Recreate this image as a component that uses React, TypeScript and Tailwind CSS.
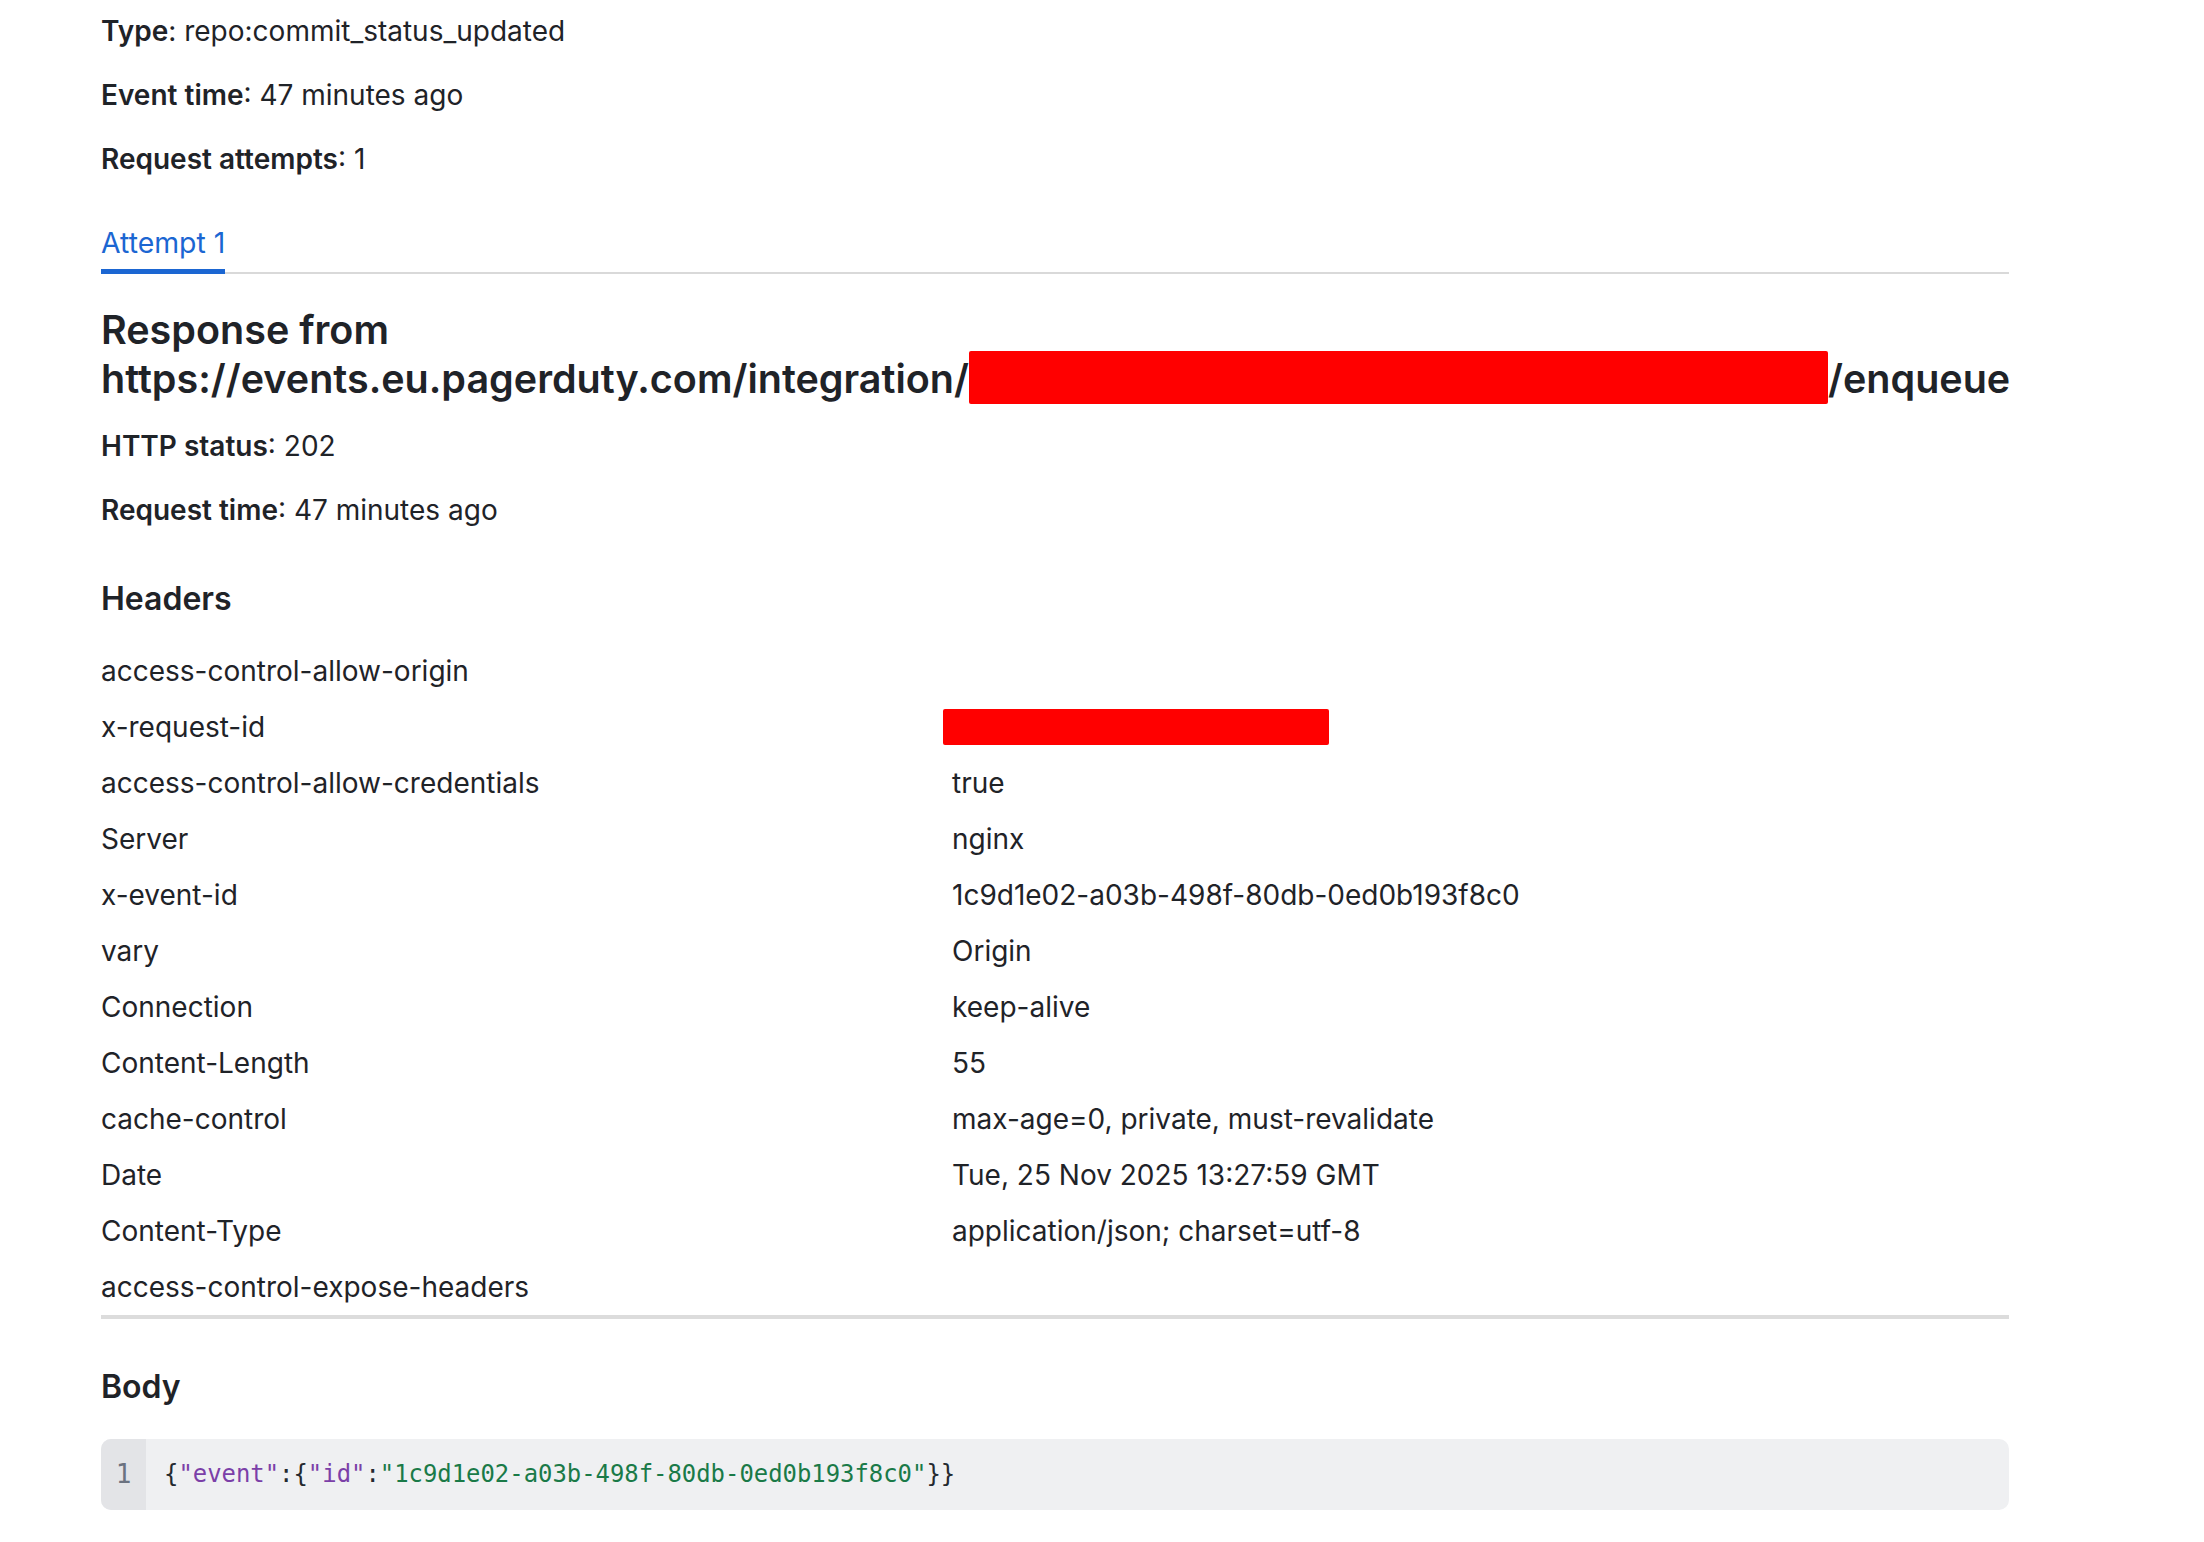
import React from "react";

const headers: [string, string | null][] = [
  ["access-control-allow-origin", ""],
  ["x-request-id", null],
  ["access-control-allow-credentials", "true"],
  ["Server", "nginx"],
  ["x-event-id", "1c9d1e02-a03b-498f-80db-0ed0b193f8c0"],
  ["vary", "Origin"],
  ["Connection", "keep-alive"],
  ["Content-Length", "55"],
  ["cache-control", "max-age=0, private, must-revalidate"],
  ["Date", "Tue, 25 Nov 2025 13:27:59 GMT"],
  ["Content-Type", "application/json; charset=utf-8"],
  ["access-control-expose-headers", ""],
];

function Field({ label, value, className }: { label: string; value: string; className?: string }) {
  return (
    <p className={"text-[28px] leading-[40px] " + (className ?? "")}>
      <span className="font-semibold">{label}</span>: {value}
    </p>
  );
}

export default function App() {
  return (
    <div className="min-h-screen bg-white text-[#1f2328] font-['Inter','Noto_Sans',sans-serif]">
      <div className="ml-[101px] w-[1908px] pt-[11px] pb-[32px]">
        <Field label="Type" value="repo:commit_status_updated" />
        <Field label="Event time" value="47 minutes ago" className="mt-[24px]" />
        <Field label="Request attempts" value="1" className="mt-[24px]" />

        <div className="mt-[44px] flex border-b-2 border-[#d9d9d9]">
          <button className="-mb-[2px] border-b-[5px] border-[#1b66d2] pb-[6px] text-[28.4px] leading-[40px] text-[#1b66d2]">
            Attempt 1
          </button>
        </div>

        <h2 className="mt-[32px] text-[39.5px] font-semibold leading-[49px]">
          <span className="block">Response from</span>
          <span className="flex h-[49px] items-center whitespace-nowrap">
            <span>https://events.eu.pagerduty.com/integration/</span>
            <span className="mb-[5px] h-[53px] w-[859px] shrink-0 rounded-[2px] bg-[#ff0000]" />
            <span>/enqueue</span>
          </span>
        </h2>

        <Field label="HTTP status" value="202" className="mt-[22px]" />
        <Field label="Request time" value="47 minutes ago" className="mt-[24px]" />

        <h3 className="mt-[49px] text-[32px] font-semibold leading-[40px]">Headers</h3>

        <div className="mt-[24px] border-b-4 border-[#dcdcdc]">
          {headers.map(([k, v]) => (
            <div key={k} className="grid h-[56px] grid-cols-[851px_1fr] items-center text-[28px] leading-[40px]">
              <div>{k}</div>
              <div>
                {v === null ? (
                  <span className="-ml-[9px] block h-[36px] w-[386px] rounded-[2px] bg-[#ff0000]" />
                ) : (
                  v
                )}
              </div>
            </div>
          ))}
        </div>

        <h3 className="mt-[48px] text-[32px] font-semibold leading-[40px]">Body</h3>

        <div className="mt-[32px] flex h-[71px] overflow-hidden rounded-[10px] bg-[#eff0f2] font-['DejaVu_Sans_Mono','Liberation_Mono',monospace] text-[23.9px]">
          <div className="flex w-[45px] items-center justify-center bg-[#e3e4e7] text-[26px] text-[#6b7280]">1</div>
          <div className="flex items-center pl-[18px] whitespace-pre">
            <span className="text-[#24292f]">{"{"}</span>
            <span className="text-[#7b3fa8]">"event"</span>
            <span className="text-[#24292f]">{":{"}</span>
            <span className="text-[#7b3fa8]">"id"</span>
            <span className="text-[#24292f]">:</span>
            <span className="text-[#1a7a48]">"1c9d1e02-a03b-498f-80db-0ed0b193f8c0"</span>
            <span className="text-[#24292f]">{"}}"}</span>
          </div>
        </div>
      </div>
    </div>
  );
}
